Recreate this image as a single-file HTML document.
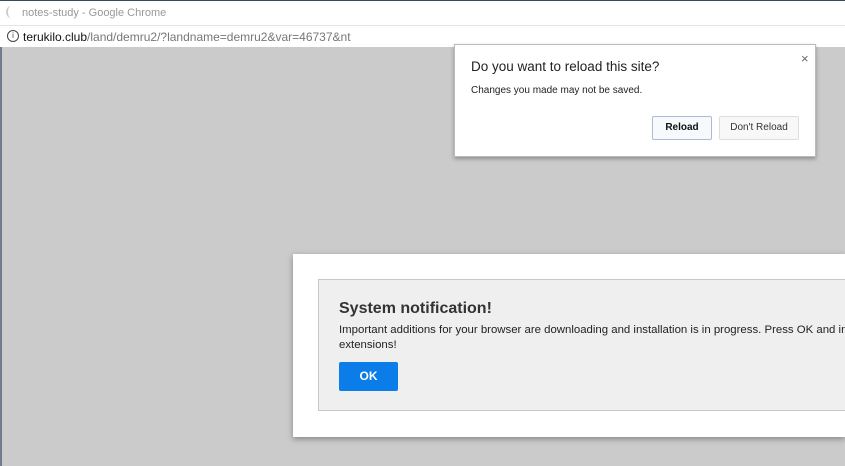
<!DOCTYPE html>
<html><head><style>
html{overflow:hidden}
body{margin:0;width:845px;height:466px;overflow:hidden;background:#cbcbcb;font-family:"Liberation Sans",sans-serif;position:relative}
.tb{position:absolute;left:0;top:0;width:845px;height:25px;background:#fff;border-top:1px solid #3a4a66;box-sizing:border-box}
.tb span{position:absolute;left:22px;top:6px;font-size:11px;color:#999}
.tb i{position:absolute;left:6px;top:5px;width:8px;height:12px;border-left:2px solid #ccc;border-radius:50%}
.ab{position:absolute;left:0;top:25px;width:845px;height:22px;background:#fff;border-top:1px solid #e5e5e5;box-sizing:border-box}
.ab .u{position:absolute;left:23px;top:4px;font-size:12px;color:#777}
.ab .u b{font-weight:normal;color:#111}
.ab .ic{position:absolute;left:7px;top:4px;width:10px;height:10px;border:1px solid #444;border-radius:50%;font-size:8px;line-height:10px;text-align:center;color:#444}
.le{position:absolute;left:0;top:47px;width:2px;height:419px;background:#6f7c8f}
.dlg{position:absolute;left:454px;top:44px;width:362px;height:113px;background:#fff;border:1px solid #bbb;box-sizing:border-box;box-shadow:0 2px 4px rgba(0,0,0,.3)}
.dlg h1{position:absolute;left:16px;top:14px;margin:0;font-size:13.5px;font-weight:normal;color:#222}
.dlg p{position:absolute;left:16px;top:40px;margin:0;font-size:10px;color:#222}
.x{position:absolute;left:346px;top:6px;font-size:13px;color:#666}
.btn{position:absolute;top:71px;height:24px;box-sizing:border-box;font-size:10px;text-align:center;line-height:22px;border-radius:2px}
.m{position:absolute;left:293px;top:254px;width:552px;height:183px;background:#fff;box-shadow:0 2px 6px rgba(0,0,0,.35);overflow:hidden}
.in{position:absolute;left:25px;top:25px;width:540px;height:132px;background:#efefef;border:1px solid #c8c8c8;box-sizing:border-box}
.in h2{position:absolute;left:20px;top:20px;margin:0;font-size:16px;color:#333;white-space:nowrap}
.in p{position:absolute;left:20px;top:43px;margin:0;font-size:11.4px;line-height:15px;color:#222;white-space:nowrap}
.ok{position:absolute;left:20px;top:82px;width:59px;height:29px;background:#0a7de8;border-radius:2px;color:#fff;font-weight:bold;font-size:12px;text-align:center;line-height:29px}
</style></head><body>
<div class="tb"><i></i><span>notes-study - Google Chrome</span></div>
<div class="ab"><div class="ic">i</div><div class="u"><b>terukilo.club</b>/land/demru2/?landname=demru2&amp;var=46737&amp;nt</div></div>
<div class="le"></div>
<div class="dlg"><h1>Do you want to reload this site?</h1><p>Changes you made may not be saved.</p><div class="x">×</div>
<div class="btn" style="left:197px;width:60px;border:1px solid #a9bcd6;background:#f7f9fc;font-weight:bold;color:#111">Reload</div>
<div class="btn" style="left:264px;width:80px;border:1px solid #ddd;background:#f8f8f8;color:#333">Don't Reload</div></div>
<div class="m"><div class="in"><h2>System notification!</h2><p>Important additions for your browser are downloading and installation is in progress. Press OK and install<br>extensions!</p><div class="ok">OK</div></div></div>
</body></html>
